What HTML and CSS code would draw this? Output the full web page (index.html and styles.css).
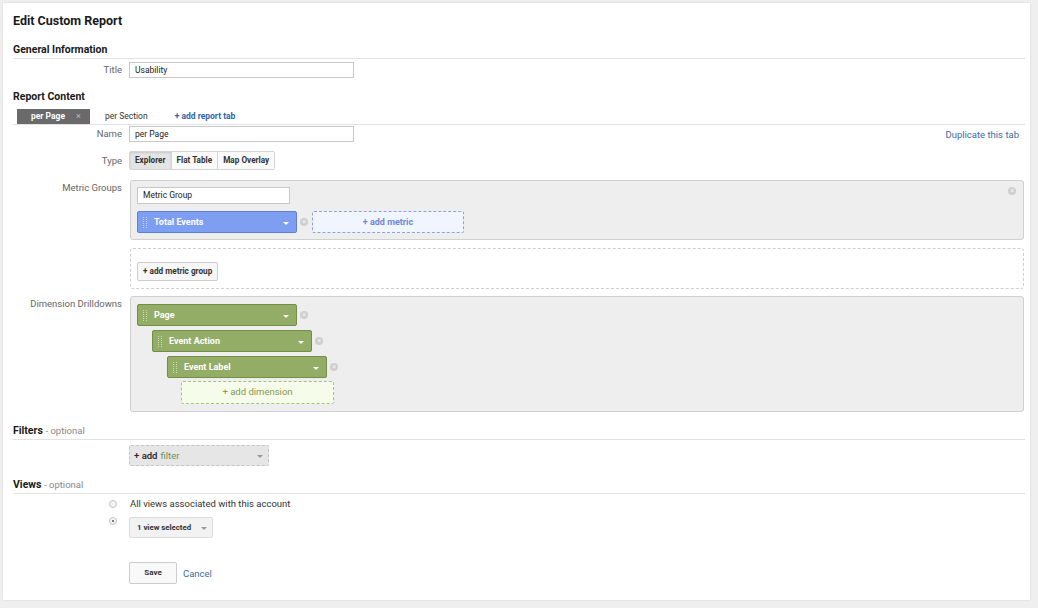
FILE: index.html
```html
<!DOCTYPE html>
<html>
<head>
<meta charset="utf-8">
<link rel="stylesheet" href="styles.css">
</head>
<body>
<div class="page">
  <div class="panel">
    <h1 class="title">Edit Custom Report</h1>

    <h2 class="section ruled">General Information</h2>
    <div class="row first">
      <div class="label">Title</div>
      <div class="input">Usability</div>
    </div>

    <h2 class="section">Report Content</h2>
    <div class="tabs">
      <div class="tab active">per Page <span class="tab-x">×</span></div>
      <div class="tab">per Section</div>
      <div class="tab add">+ add report tab</div>
    </div>
    <div class="row name-row">
      <div class="label">Name</div>
      <div class="input">per Page</div>
      <div class="spacer"></div>
      <a class="link dup">Duplicate this tab</a>
    </div>
    <div class="row type-row">
      <div class="label">Type</div>
      <div class="btn-group">
        <div class="seg selected">Explorer</div>
        <div class="seg">Flat Table</div>
        <div class="seg">Map Overlay</div>
      </div>
    </div>

    <div class="row block-row metric-row">
      <div class="label">Metric Groups</div>
      <div class="box metric-box">
        <span class="remove box-remove">×</span>
        <div class="input small">Metric Group</div>
        <div class="chip-line">
          <div class="chip blue"><span class="grip"></span><span class="chip-text">Total Events</span><span class="caret"></span></div>
          <span class="remove">×</span>
          <div class="dashed-add blue-add">+ add metric</div>
        </div>
      </div>
    </div>

    <div class="row block-row group-row">
      <div class="label"></div>
      <div class="dashed-box">
        <div class="small-btn">+ add metric group</div>
      </div>
    </div>

    <div class="row block-row dim-row">
      <div class="label">Dimension Drilldowns</div>
      <div class="box dim-box">
        <div class="chip-line lvl0">
          <div class="chip green"><span class="grip"></span><span class="chip-text">Page</span><span class="caret"></span></div>
          <span class="remove">×</span>
        </div>
        <div class="chip-line lvl1">
          <div class="chip green"><span class="grip"></span><span class="chip-text">Event Action</span><span class="caret"></span></div>
          <span class="remove">×</span>
        </div>
        <div class="chip-line lvl2">
          <div class="chip green"><span class="grip"></span><span class="chip-text">Event Label</span><span class="caret"></span></div>
          <span class="remove">×</span>
        </div>
        <div class="chip-line lvl3">
          <div class="dashed-add green-add">+ add dimension</div>
        </div>
      </div>
    </div>

    <h2 class="section ruled filters-h">Filters <span class="opt">- optional</span></h2>
    <div class="row filter-row">
      <div class="label"></div>
      <div class="filter-add"><span class="plus">+ add</span> <span class="word">filter</span><span class="caret gray"></span></div>
    </div>

    <h2 class="section ruled views-h">Views <span class="opt">- optional</span></h2>
    <div class="row radio-row">
      <div class="label"><span class="radio"></span></div>
      <div class="radio-text">All views associated with this account</div>
    </div>
    <div class="row radio-row2">
      <div class="label"><span class="radio checked"></span></div>
      <div class="dropdown">1 view selected<span class="caret gray"></span></div>
    </div>

    <div class="row save-row">
      <div class="label"></div>
      <div class="save">Save</div>
      <a class="link cancel">Cancel</a>
    </div>
  </div>
</div>
</body>
</html>
```

FILE: styles.css
```css
* { box-sizing: border-box; }
html, body { margin: 0; padding: 0; }
body {
  background: #efefef;
  font-family: Roboto, "Liberation Sans", Arial, sans-serif;
  color: #222;
  width: 1038px;
  height: 608px;
  overflow: hidden;
}
.page { padding: 3px 0 0 3px; }
.panel {
  width: 1027px;
  height: 597px;
  background: #fff;
  box-shadow: 0 0 2px rgba(0,0,0,0.12);
  padding: 8px 5px 0 10px;
}
.title {
  margin: 0;
  font-size: 12.5px;
  line-height: 20px;
  font-weight: 700;
  color: #1a1a1a;
}
.section {
  margin: 12px 0 0 0;
  font-size: 10.5px;
  line-height: 14px;
  font-weight: 700;
  color: #1a1a1a;
}
.section.ruled {
  padding-bottom: 1px;
  border-bottom: 1px solid #e2e2e2;
}
.opt { font-weight: 400; color: #888; font-size: 9.5px; }
.row { display: flex; align-items: center; }
.row.first { margin-top: 3px; }
.label {
  width: 109px;
  flex: 0 0 109px;
  margin-right: 7px;
  text-align: right;
  font-size: 9.5px;
  line-height: 16px;
  color: #666;
}
.input {
  width: 225px;
  height: 16px;
  border: 1px solid #c8c8c8;
  font-size: 8.5px;
  line-height: 14px;
  padding-left: 5px;
  color: #222;
  background: #fff;
}
.input.small { width: 153px; height: 17px; line-height: 15px; }
.tabs {
  margin-top: 5px;
  display: flex;
  align-items: center;
  height: 16px;
  border-bottom: 1px solid #e2e2e2;
  padding-left: 4px;
}
.tab {
  font-size: 8.5px;
  height: 15px;
  line-height: 15px;
  color: #333;
}
.tab.active {
  width: 73px;
  background: #6a6a6a;
  color: #fff;
  font-weight: 700;
  padding-left: 14px;
  position: relative;
}
.tab-x { position: absolute; left: 59px; top: 0; color: #bbb; font-weight: 400; font-size: 9px; }
.tab:nth-child(2) { margin-left: 15px; }
.tab.add { margin-left: 27px; color: #2f66a8; font-weight: 700; }
.name-row { margin-top: 1px; }
.spacer { flex: 1; }
.link { font-size: 9.5px; color: #3a6da4; cursor: pointer; }
.dup { margin-right: 6px; }
.type-row { margin-top: 9px; }
.btn-group {
  display: flex;
  height: 19px;
  border: 1px solid #d4d4d4;
  border-radius: 2px;
}
.seg {
  font-size: 8.2px;
  font-weight: 700;
  line-height: 17px;
  padding: 0 5px;
  color: #333;
  border-left: 1px solid #d4d4d4;
  background: #fafafa;
}
.seg:first-child { border-left: none; }
.seg.selected { background: #e4e4e4; box-shadow: inset 0 1px 2px rgba(0,0,0,0.12); }
.block-row { align-items: flex-start; }
.metric-row { margin-top: 10px; }
.box {
  flex: 0 0 894px;
  width: 894px;
  margin-left: 1px;
  background: #eeeeee;
  border: 1px solid #d0d0d0;
  border-radius: 3px;
  position: relative;
}
.metric-box { height: 60px; padding: 6px 0 0 6px; }
.box-remove { position: absolute; right: 7px; top: 6px; }
.chip-line { display: flex; align-items: center; margin-top: 7px; }
.chip {
  width: 160px;
  height: 22px;
  border-radius: 2px;
  display: flex;
  align-items: center;
  color: #fff;
  font-weight: 700;
  font-size: 9px;
  position: relative;
}
.chip.blue { background: #7e9ef1; border: 1px solid #5f80d6; }
.chip.green { background: #94ad66; border: 1px solid #738f46; width: 160px; }
.grip {
  width: 4px;
  height: 11px;
  margin-left: 5px;
  margin-right: 7px;
  border-left: 1px dotted rgba(255,255,255,0.55);
  border-right: 1px dotted rgba(255,255,255,0.55);
}
.chip-text { flex: 1; }
.caret {
  width: 0; height: 0;
  border-left: 3px solid transparent;
  border-right: 3px solid transparent;
  border-top: 3px solid #fff;
  margin-right: 7px;
  margin-top: 2px;
}
.caret.gray { border-top-color: #999; margin-left: auto; margin-right: 5px; }
.remove {
  display: inline-block;
  width: 8px; height: 8px;
  border-radius: 50%;
  background: #cfcfcf;
  color: #f4f4f4;
  font-size: 7px;
  line-height: 8px;
  text-align: center;
  margin-left: 3px;
}
.dashed-add {
  height: 22px;
  width: 152px;
  border: 1px dashed #8ea2d8;
  border-radius: 2px;
  font-size: 9px;
  font-weight: 700;
  line-height: 20px;
  text-align: center;
}
.blue-add { margin-left: 4px; background: #f1f5ff; color: #6f88d6; }
.green-add { background: #f5fce9; border-color: #a9bf86; color: #7e9b58; font-weight: 400; font-size: 9.5px; height: 23px; width: 153px; }
.group-row { margin-top: 8px; }
.dashed-box {
  flex: 0 0 894px;
  margin-left: 1px;
  height: 41px;
  border: 1px dashed #cfcfcf;
  border-radius: 3px;
  padding: 10px 0 0 6px;
}
.small-btn {
  display: inline-block;
  height: 19px;
  line-height: 17px;
  padding: 0 5px;
  border: 1px solid #ccc;
  border-radius: 2px;
  background: #f7f7f7;
  font-size: 8.2px;
  font-weight: 700;
  color: #333;
}
.dim-row { margin-top: 7px; }
.dim-box { height: 116px; padding: 7px 0 0 6px; }
.dim-box .chip-line { margin-top: 4px; }
.dim-box .chip-line.lvl0 { margin-top: 0; }
.lvl1 { padding-left: 15px; }
.lvl2 { padding-left: 30px; }
.dim-box .chip-line.lvl3 { padding-left: 44px; margin-top: 3px; }
.dim-box .chip { height: 22px; }
.filters-h { margin-top: 12px; }
.filter-row { margin-top: 5px; }
.filter-add {
  width: 140px;
  height: 21px;
  background: #e6e6e6;
  border: 1px dashed #c4c4c4;
  border-radius: 2px;
  display: flex;
  align-items: center;
  padding-left: 4px;
  font-size: 9.5px;
}
.filter-add .plus { color: #222; font-weight: 500; }
.filter-add .word { color: #6f8f58; margin-left: 3px; }
.views-h { margin-top: 12px; }
.radio-row { margin-top: 2px; }
.radio-row .label, .radio-row2 .label { display: flex; justify-content: flex-end; align-items: center; padding-right: 5px; }
.radio {
  width: 8px; height: 8px;
  border-radius: 50%;
  border: 1px solid #c4c4c4;
  background: #f3f3f3;
  position: relative;
}
.radio.checked::after {
  content: "";
  position: absolute;
  left: 2px; top: 2px;
  width: 2px; height: 2px;
  border-radius: 50%;
  background: #555;
}
.radio-text { font-size: 9.5px; color: #333; line-height: 16px; margin-left: 1px; }
.radio-row2 { margin-top: 5px; }
.radio-row2 .label { align-self: flex-start; padding-top: 0; }
.dropdown {
  width: 84px;
  height: 21px;
  background: #f2f2f2;
  border: 1px solid #dcdcdc;
  border-radius: 2px;
  display: flex;
  align-items: center;
  padding-left: 7px;
  font-size: 7.8px;
  font-weight: 700;
  color: #333;
}
.save-row { margin-top: 24px; }
.save {
  width: 48px;
  height: 22px;
  border: 1px solid #ccc;
  border-radius: 2px;
  background: #f9f9f9;
  font-size: 8px;
  font-weight: 700;
  line-height: 20px;
  text-align: center;
  color: #333;
}
.cancel { margin-left: 6px; }
```
